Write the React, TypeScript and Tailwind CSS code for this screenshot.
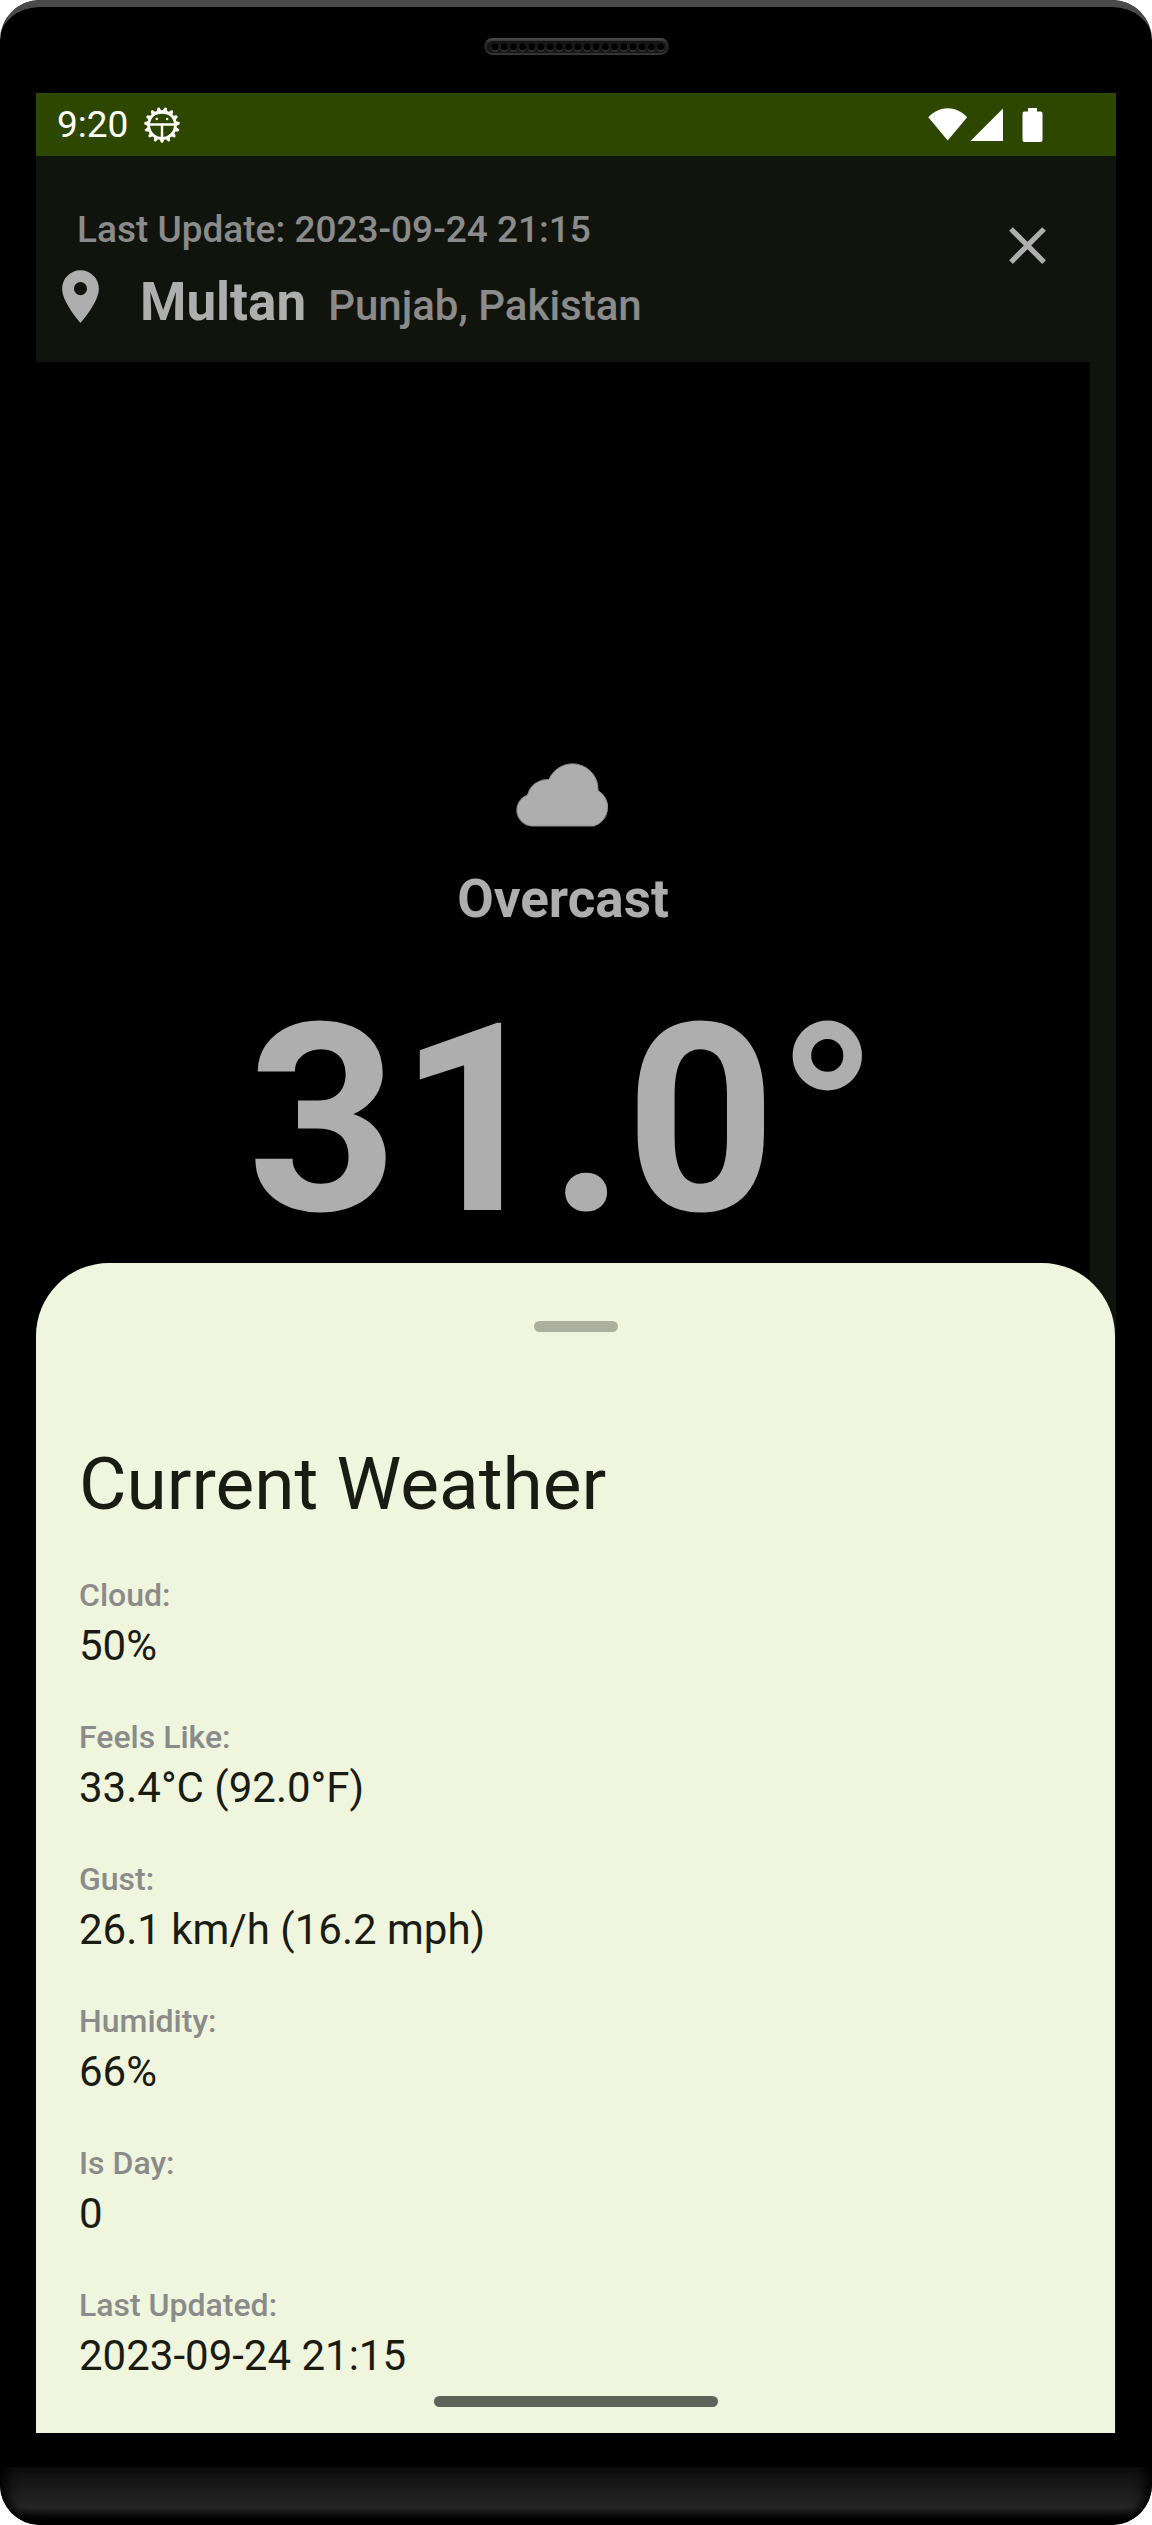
import React from "react";

const details = [
  { label: "Cloud:", value: "50%" },
  { label: "Feels Like:", value: "33.4°C (92.0°F)" },
  { label: "Gust:", value: "26.1 km/h (16.2 mph)" },
  { label: "Humidity:", value: "66%" },
  { label: "Is Day:", value: "0" },
  { label: "Last Updated:", value: "2023-09-24 21:15" },
];

function Speaker() {
  return (
    <svg viewBox="0 0 185 17" className="block h-[17px] w-[185px]" aria-hidden="true">
      <defs>
        <linearGradient id="speaker-rim" x1="0" y1="0" x2="0" y2="1">
          <stop offset="0" stopColor="#505050" />
          <stop offset="0.25" stopColor="#2a2a2a" />
          <stop offset="0.75" stopColor="#222222" />
          <stop offset="1" stopColor="#3a3a3a" />
        </linearGradient>
      </defs>
      <rect width="185" height="17" rx="8.5" fill="url(#speaker-rim)" />
      <rect x="3" y="3" width="179" height="12" rx="6" fill="#161616" />
      {Array.from({ length: 19 }, (_, i) => (
        <g key={i}>
          <circle cx={11 + i * 9.2} cy="9.8" r="3.6" fill="#4a4a4a" />
          <circle cx={11 + i * 9.2} cy="9" r="3.5" fill="#000000" />
        </g>
      ))}
    </svg>
  );
}

function BugIcon() {
  return (
    <svg viewBox="-18 -18 36 36" className="h-9 w-9" aria-hidden="true">
      {Array.from({ length: 15 }, (_, i) => (
        <path key={i} d="M-2.9 13L-1.200 17.300Q0 18.600 1.200 17.300L2.900 13z" fill="#fff" transform={`rotate(${i * 24})`} />
      ))}
      <circle r="13.400" fill="none" stroke="#fff" strokeWidth="2.800" />
      <path d="M-10 -8A12.500 12.500 0 0 1 10 -8A17 17 0 0 0 -10 -8z" fill="#fff" />
      <path d="M-13 -0.500h26M0 -0.500v13" stroke="#fff" strokeWidth="2.400" />
      <circle cx="-5.200" cy="-6" r="1.200" fill="#fff" />
      <circle cx="5.200" cy="-6" r="1.200" fill="#fff" />
    </svg>
  );
}

function StatusBar() {
  return (
    <div className="flex h-[63px] items-center justify-between bg-[#2e4700] pr-[73px] pl-[21px] text-white">
      <div className="flex items-center gap-4">
        <span className="text-[37px] leading-[63px]">9:20</span>
        <BugIcon />
      </div>
      <svg viewBox="0 0 115 34" className="h-[34px] w-[115px]" fill="#fff" aria-hidden="true">
        <path d="M0.3 9.2C12 -2.6 27.500 -2.6 39.200 9.200L19.700 32.500z" />
        <path d="M75 0.500V33H42.500z" />
        <path d="M100 0h9v3.500h3.500q2 0 2 2v26.500q0 2 -2 2h-16q-2 0 -2 -2v-26.500q0 -2 2 -2h3.500z" />
      </svg>
    </div>
  );
}

function Header() {
  return (
    <header className="flex items-start justify-between bg-[#11140d] pt-[47px] pr-[57px] pb-[22px] pl-[13px]">
      <div className="flex flex-col gap-[9px]">
        <p className="pl-7 text-[37px] leading-[53px] font-medium text-[#8b8b8b]">Last Update: 2023-09-24 21:15</p>
        <div className="flex items-start gap-7">
          <svg viewBox="0 0 24 24" className="h-[63px] w-[63px]" fill="#aeaeae" aria-hidden="true">
            <path d="M12 2C8.130 2 5 5.130 5 9c0 5.250 7 13 7 13s7-7.750 7-13c0-3.870-3.130-7-7-7zm0 9.500a2.500 2.500 0 1 1 0-5 2.500 2.500 0 0 1 0 5z" />
          </svg>
          <h1 className="flex items-baseline gap-[22px]">
            <span className="text-[53px] leading-[75px] font-bold text-[#aeaeae]">Multan</span>
            <span className="text-[42px] leading-[63px] font-medium text-[#8b8b8b]">Punjab, Pakistan</span>
          </h1>
        </div>
      </div>
      <button type="button" aria-label="Close" className="mt-[11px] block">
        <svg viewBox="0 0 24 24" className="h-[63px] w-[63px]" fill="#aeaeae" aria-hidden="true">
          <path d="M19 6.410L17.590 5 12 10.590 6.410 5 5 6.410 10.590 12 5 17.590 6.410 19 12 13.410 17.590 19 19 17.590 13.410 12z" />
        </svg>
      </button>
    </header>
  );
}

function Cloud() {
  return (
    <svg viewBox="0 0 94 64" className="h-16 w-[94px]" aria-hidden="true">
      <path
        d="M15 63A16 16 0 0 1 11.500 32A20.500 20.500 0 0 1 33 16.500A25.500 25.500 0 0 1 82 27.500A19.500 19.500 0 0 1 78 63z"
        fill="#aeaeae"
        stroke="#8a8a8a"
        strokeWidth="1"
      />
    </svg>
  );
}

export default function App() {
  return (
    <div className="min-h-screen bg-white font-['Roboto',sans-serif]">
      <div className="flex flex-col overflow-hidden rounded-[40px] bg-black">
        <div className="flex h-[93px] flex-col items-center rounded-t-[40px] border-t-[7px] border-[#4a4a4a] pt-[31px]">
          <Speaker />
        </div>

        <div className="mx-9 bg-[#11140d]">
          <StatusBar />
          <Header />
          <section className="mr-[26px] flex flex-col items-center bg-black pt-[401px] pb-[62px] text-[#aeaeae]">
            <Cloud />
            <p className="mt-[35px] text-[53px] leading-[74px] font-bold">Overcast</p>
            <p className="mt-[30px] text-[263px] leading-[308px] font-bold">31.0°</p>
          </section>

          <main className="relative -mt-[73px] mr-px rounded-t-[73px] bg-[#f0f5de] pt-[58px] pb-[26px] text-[#1a1c13]">
            <div className="mx-auto h-[11px] w-[84px] rounded-full bg-[#adb09c]" />
            <div className="mt-[105px] px-[43px]">
              <h2 className="text-[73px] leading-[95px]">Current Weather</h2>
              <dl className="mt-[42px] flex flex-col gap-10">
                {details.map((d) => (
                  <div key={d.label}>
                    <dt className="text-[32px] leading-[42px] font-medium text-[#8b8b8b]">{d.label}</dt>
                    <dd className="text-[42px] leading-[60px]">{d.value}</dd>
                  </div>
                ))}
              </dl>
            </div>
            <div className="mx-auto mt-[10px] h-[11px] w-[284px] rounded-full bg-[#60635a]" />
          </main>
        </div>

        <div className="mt-[34px] h-[58px] rounded-b-[40px] bg-linear-to-b from-[#0c0c0c] via-[#262626] via-70% to-black shadow-[inset_14px_0_12px_-8px_#000,inset_-14px_0_12px_-8px_#000]" />
      </div>
    </div>
  );
}
